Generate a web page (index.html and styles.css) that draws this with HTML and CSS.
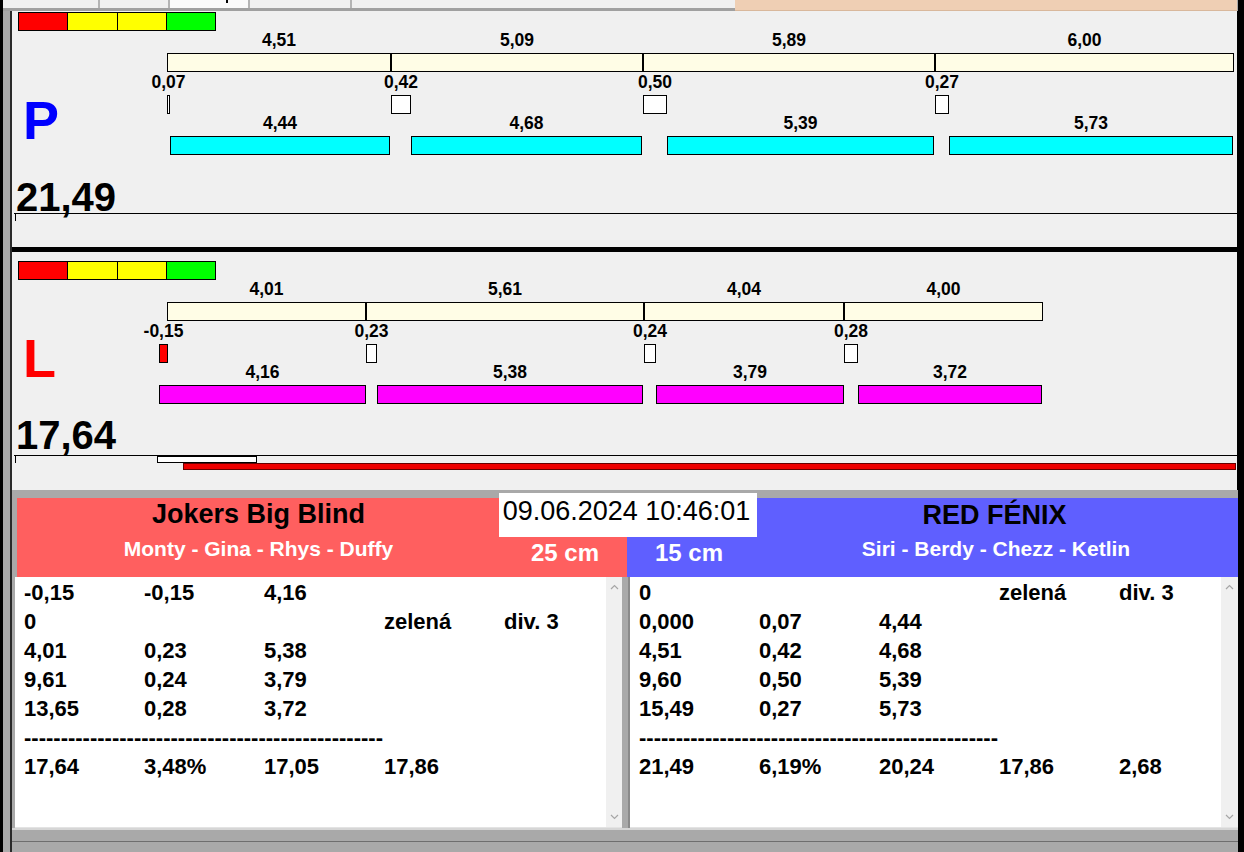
FILE: index.html
```html
<!DOCTYPE html>
<html lang="cs">
<head>
<meta charset="utf-8">
<title>Scoreboard</title>
<link rel="stylesheet" href="styles.css">
</head>
<body>
<div class="screen">
  <div class="edge-l"></div>
  <div class="window">
    <div class="tabs">
      <div class="tabstrip">
        <div class="tab" style="width:88px"></div>
        <div class="tab" style="width:70px"></div>
        <div class="tab sel" style="width:80px"><span class="tabglyph"></span></div>
        <div class="tab" style="width:102px"></div>
        <div class="tab last"></div>
      </div>
      <div class="peach"></div>
    </div>

    <div class="upper">
      <section class="panel p">
        <div class="lights"><i class="r"></i><i class="y"></i><i class="y"></i><i class="g"></i></div>
        <div class="chart-row">
          <div class="letter">P</div>
          <div class="chart">
            <div class="col" style="width:224px">
              <div class="lbl">4,51</div>
              <div class="seg"></div>
              <div class="mark" style="width:3px"><div class="lbl">0,07</div><div class="box"></div></div>
              <div class="bar cyan" style="margin-left:3px;width:220px"><div class="lbl">4,44</div><div class="fill"></div></div>
            </div>
            <div class="col" style="width:252px">
              <div class="lbl">5,09</div>
              <div class="seg"></div>
              <div class="mark" style="width:20px"><div class="lbl">0,42</div><div class="box"></div></div>
              <div class="bar cyan" style="margin-left:20px;width:231px"><div class="lbl">4,68</div><div class="fill"></div></div>
            </div>
            <div class="col" style="width:292px">
              <div class="lbl">5,89</div>
              <div class="seg"></div>
              <div class="mark" style="width:24px"><div class="lbl">0,50</div><div class="box"></div></div>
              <div class="bar cyan" style="margin-left:24px;width:267px"><div class="lbl">5,39</div><div class="fill"></div></div>
            </div>
            <div class="col" style="width:299px">
              <div class="lbl">6,00</div>
              <div class="seg"></div>
              <div class="mark" style="width:14px"><div class="lbl">0,27</div><div class="box"></div></div>
              <div class="bar cyan" style="margin-left:14px;width:284px"><div class="lbl">5,73</div><div class="fill"></div></div>
            </div>
          </div>
        </div>
        <div class="total">21,49</div>
        <div class="track">
          <div class="track-line"><span class="tick"></span></div>
        </div>
      </section>

      <div class="sep"></div>

      <section class="panel l">
        <div class="lights"><i class="r"></i><i class="y"></i><i class="y"></i><i class="g"></i></div>
        <div class="chart-row">
          <div class="letter">L</div>
          <div class="chart">
            <div class="col" style="width:199px">
              <div class="lbl">4,01</div>
              <div class="seg"></div>
              <div class="mark" style="width:9px;margin-left:-8px"><div class="lbl">-0,15</div><div class="box neg"></div></div>
              <div class="bar magenta" style="margin-left:-8px;width:207px"><div class="lbl">4,16</div><div class="fill"></div></div>
            </div>
            <div class="col" style="width:278px">
              <div class="lbl">5,61</div>
              <div class="seg"></div>
              <div class="mark" style="width:11px"><div class="lbl">0,23</div><div class="box"></div></div>
              <div class="bar magenta" style="margin-left:11px;width:266px"><div class="lbl">5,38</div><div class="fill"></div></div>
            </div>
            <div class="col" style="width:200px">
              <div class="lbl">4,04</div>
              <div class="seg"></div>
              <div class="mark" style="width:12px"><div class="lbl">0,24</div><div class="box"></div></div>
              <div class="bar magenta" style="margin-left:12px;width:188px"><div class="lbl">3,79</div><div class="fill"></div></div>
            </div>
            <div class="col" style="width:199px">
              <div class="lbl">4,00</div>
              <div class="seg"></div>
              <div class="mark" style="width:14px"><div class="lbl">0,28</div><div class="box"></div></div>
              <div class="bar magenta" style="margin-left:14px;width:184px"><div class="lbl">3,72</div><div class="fill"></div></div>
            </div>
          </div>
        </div>
        <div class="total">17,64</div>
        <div class="track">
          <div class="track-line"><span class="tick"></span><span class="pos-box" style="margin-left:141px;width:100px"></span></div>
          <div class="pos-bar" style="margin-left:169px;width:1053px"></div>
        </div>
      </section>
    </div>

    <div class="lower">
      <div class="gapbar"></div>
      <div class="headers">
        <div class="hdr red">
          <div class="title">Jokers Big Blind</div>
          <div class="names">Monty - Gina - Rhys - Duffy</div>
          <div class="cm">25 cm</div>
        </div>
        <div class="hdr blue">
          <div class="cm">15 cm</div>
          <div class="title">RED FÉNIX</div>
          <div class="names">Siri - Berdy - Chezz - Ketlin</div>
        </div>
        <div class="clock">09.06.2024 10:46:01</div>
      </div>
      <div class="areas">
        <div class="ta left">
          <div class="text">
            <div class="row"><span>-0,15</span><span>-0,15</span><span>4,16</span></div>
            <div class="row"><span>0</span><span></span><span></span><span>zelená</span><span>div. 3</span></div>
            <div class="row"><span>4,01</span><span>0,23</span><span>5,38</span></div>
            <div class="row"><span>9,61</span><span>0,24</span><span>3,79</span></div>
            <div class="row"><span>13,65</span><span>0,28</span><span>3,72</span></div>
            <div class="row dash">-------------------------------------------------</div>
            <div class="row"><span>17,64</span><span>3,48%</span><span>17,05</span><span>17,86</span></div>
          </div>
          <div class="sb">
            <svg width="9" height="6" viewBox="0 0 9 6"><polyline points="1,5 4.5,1.5 8,5" fill="none" stroke="#a6a6a6" stroke-width="1.2"/></svg>
            <svg width="9" height="6" viewBox="0 0 9 6"><polyline points="1,1 4.5,4.5 8,1" fill="none" stroke="#a6a6a6" stroke-width="1.2"/></svg>
          </div>
        </div>
        <div class="ta-gap"></div>
        <div class="ta right">
          <div class="text">
            <div class="row"><span>0</span><span></span><span></span><span>zelená</span><span>div. 3</span></div>
            <div class="row"><span>0,000</span><span>0,07</span><span>4,44</span></div>
            <div class="row"><span>4,51</span><span>0,42</span><span>4,68</span></div>
            <div class="row"><span>9,60</span><span>0,50</span><span>5,39</span></div>
            <div class="row"><span>15,49</span><span>0,27</span><span>5,73</span></div>
            <div class="row dash">-------------------------------------------------</div>
            <div class="row"><span>21,49</span><span>6,19%</span><span>20,24</span><span>17,86</span><span>2,68</span></div>
          </div>
          <div class="sb">
            <svg width="9" height="6" viewBox="0 0 9 6"><polyline points="1,5 4.5,1.5 8,5" fill="none" stroke="#a6a6a6" stroke-width="1.2"/></svg>
            <svg width="9" height="6" viewBox="0 0 9 6"><polyline points="1,1 4.5,4.5 8,1" fill="none" stroke="#a6a6a6" stroke-width="1.2"/></svg>
          </div>
        </div>
      </div>
      <div class="foot"></div>
    </div>
  </div>
  <div class="edge-r"></div>
</div>
</body>
</html>
```

FILE: styles.css
```css
* { box-sizing: border-box; margin: 0; padding: 0; }
html, body { width: 1244px; height: 852px; overflow: hidden; background: #000; }
body { font-family: "Liberation Sans", Arial, sans-serif; color: #000; }

.screen { display: flex; width: 1244px; height: 852px; background: #000; }
.edge-l { width: 3px; flex: none; }
.edge-r { width: 6px; flex: none; }
.window { width: 1235px; flex: none; display: flex; flex-direction: column; background: #a9a9a9; }

/* top tab strip */
.tabs { height: 11px; display: flex; flex: none; }
.tabstrip { width: 732px; display: flex; background: #f0f0f0; border-bottom: 3px solid #a0a0a0; padding-left: 9px; }
.tab { height: 8px; border-right: 2px solid #b4b4b4; position: relative; }
.tab.sel { background: #fafafa; }
.tab.last { flex: 1; border-right: 0; }
.tabglyph { display: block; width: 2px; height: 3px; background: #000; margin-left: 56px; }
.peach { width: 502px; background: #efcfb4; border-bottom: 1px solid #d9b89c; }

/* upper panels */
.upper { margin-left: 7px; width: 1228px; border-left: 2px solid #2a2a2a; border-right: 1px solid #000; background: #f0f0f0; flex: none; }
.panel { display: flex; flex-direction: column; background: #f0f0f0; }
.panel.p { height: 236px; }
.panel.l { height: 238px; }
.sep { height: 5px; background: #000; }

.lights { display: flex; width: 198px; height: 19px; margin-left: 6px; border: 1px solid #000; flex: none; }
.lights i { flex: 1; border-left: 1px solid #000; }
.lights i:first-child { border-left: 0; }
.lights .r { background: #ff0000; }
.lights .y { background: #ffff00; }
.lights .g { background: #00ff00; }
.p .lights { margin-top: 1px; }
.l .lights { margin-top: 9px; }

.chart-row { display: flex; margin-top: 2px; height: 122px; flex: none; }
.letter { width: 155px; flex: none; padding-left: 11px; font-size: 54px; line-height: 54px; font-weight: bold; }
.p .letter { color: #0000ff; padding-top: 60px; }
.l .letter { color: #ff0000; padding-top: 49px; }

.chart { display: flex; align-items: flex-start; }
.col { display: flex; flex-direction: column; flex: none; }
.lbl { height: 14px; font-size: 17.5px; line-height: 14px; font-weight: bold; text-align: center; white-space: nowrap; }
.seg { margin-top: 6px; height: 19px; border: 1px solid #000; background: #fffde6; }
.mark { margin-top: 3px; display: flex; flex-direction: column; align-items: center; }
.box { margin-top: 6px; height: 19px; width: 100%; border: 1px solid #000; background: #fff; }
.box.neg { background: #ff0000; }
.bar { margin-top: 2px; display: flex; flex-direction: column; }
.fill { margin-top: 6px; height: 19px; border: 1px solid #000; }
.cyan .fill { background: #00ffff; }
.magenta .fill { background: #ff00ff; }

.total { font-size: 40px; line-height: 32px; font-weight: bold; padding-left: 4px; height: 32px; flex: none; }
.p .total { margin-top: 26px; }
.l .total { margin-top: 15px; }

.track { margin-left: 2px; border-top: 1px solid #000; flex: none; display: flex; flex-direction: column; }
.p .track { height: 34px; }
.l .track { height: 35px; margin-top: 4px; }
.track-line { display: flex; height: 7px; }
.tick { width: 1px; height: 7px; background: #000; margin-left: 1px; flex: none; }
.pos-box { height: 7px; border: 1px solid #000; background: #fff; flex: none; }
.pos-bar { height: 7px; border: 1px solid #600; background: #ee0000; }

/* lower section */
.lower { margin-left: 7px; width: 1228px; border-left: 2px solid #2a2a2a; flex: 1; display: flex; flex-direction: column; background: #a9a9a9; }
.gapbar { height: 8px; background: #a9a9a9; flex: none; }
.headers { position: relative; display: flex; height: 79px; margin-left: 5px; flex: none; }
.hdr { display: grid; grid-template-rows: 32px auto; color: #fff; font-weight: bold; }
.hdr.red { width: 610px; background: #ff5f5f; grid-template-columns: 483px 1fr; }
.hdr.blue { width: 611px; background: #5f5fff; grid-template-columns: 130px 1fr; }
.title { font-size: 27px; line-height: 32px; color: #000; text-align: center; white-space: nowrap; grid-row: 1; }
.names { font-size: 21px; line-height: 24px; text-align: center; white-space: nowrap; margin-top: 7px; grid-row: 2; }
.cm { font-size: 24px; line-height: 24px; white-space: nowrap; margin-top: 11px; grid-row: 2; }
.red .title, .red .names { grid-column: 1; }
.red .cm { grid-column: 2; text-align: right; padding-right: 28px; }
.blue .title { grid-column: 2; padding-right: 6px; margin-top: 1px; }
.blue .names { grid-column: 2; padding-right: 3px; }
.blue .cm { grid-column: 1; padding-left: 28px; }
.clock { position: absolute; left: 482px; top: -5px; width: 258px; height: 44px; background: #fff; color: #000; font-size: 27px; line-height: 30px; padding-top: 3px; padding-right: 3px; text-align: center; white-space: nowrap; }

.areas { display: flex; height: 251px; margin-left: 3px; flex: none; }
.ta { display: flex; background: #fff; border-bottom: 1px solid #e3e3e3; }
.ta.left { width: 607px; }
.ta.right { width: 608px; }
.ta-gap { width: 8px; background: #a9a9a9; border-right: 2px solid #8a8a8a; }
.text { flex: 1; padding: 1px 0 0 9px; overflow: hidden; }
.row { display: grid; grid-template-columns: repeat(5, 120px); height: 29px; font-size: 22px; line-height: 29px; font-weight: bold; white-space: nowrap; }
.row.dash { display: block; }
.sb { width: 16px; background: #f0f0f0; display: flex; flex-direction: column; justify-content: space-between; align-items: center; padding: 7px 0 7px; flex: none; }
.ta.right .sb { width: 17px; }
.foot { flex: 1; border-top: 2px solid #d6d6d6; background: #a9a9a9; display: flex; flex-direction: column; }
.foot::after { content: ""; display: block; margin-top: 11px; height: 1px; background: #6e6e6e; }
```
